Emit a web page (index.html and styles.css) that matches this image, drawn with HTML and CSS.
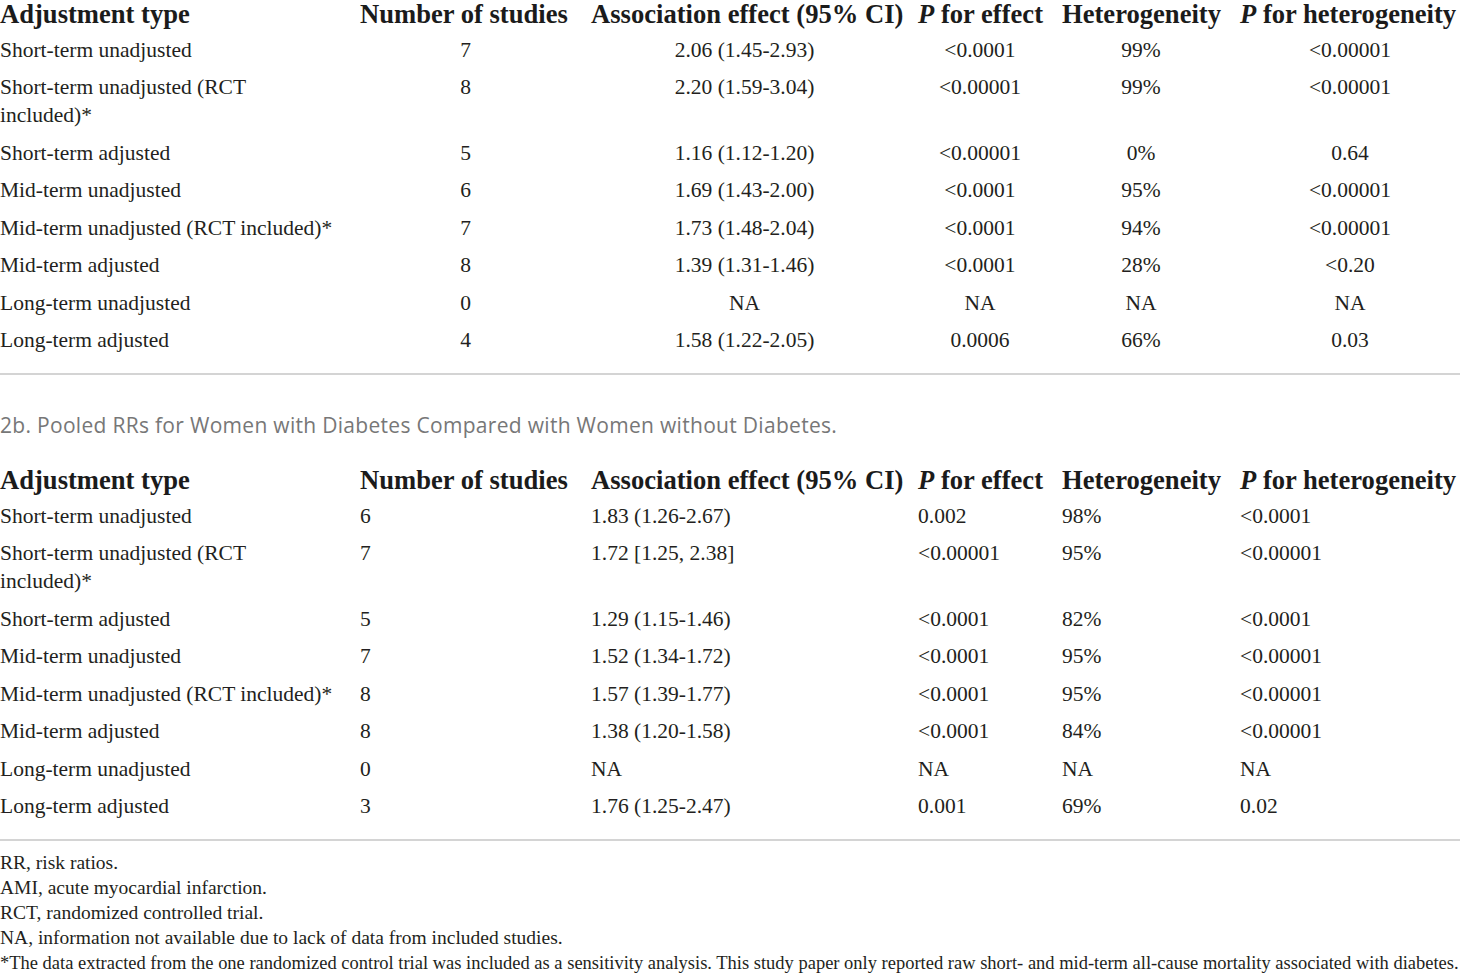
FILE: index.html
```html
<!DOCTYPE html>
<html>
<head>
<meta charset="utf-8">
<link rel="stylesheet" href="styles.css">
</head>
<body>
<div class="page">
  <table class="data centered">
    <colgroup>
      <col class="c1"><col class="c2"><col class="c3"><col class="c4"><col class="c5"><col class="c6">
    </colgroup>
    <thead>
      <tr><th class="first">Adjustment type</th><th>Number of studies</th><th>Association effect (95% CI)</th><th><i>P</i> for effect</th><th>Heterogeneity</th><th><i>P</i> for heterogeneity</th></tr>
    </thead>
    <tbody>
      <tr><td>Short-term unadjusted</td><td>7</td><td>2.06 (1.45-2.93)</td><td>&lt;0.0001</td><td>99%</td><td>&lt;0.00001</td></tr>
      <tr><td>Short-term unadjusted (RCT included)*</td><td>8</td><td>2.20 (1.59-3.04)</td><td>&lt;0.00001</td><td>99%</td><td>&lt;0.00001</td></tr>
      <tr><td>Short-term adjusted</td><td>5</td><td>1.16 (1.12-1.20)</td><td>&lt;0.00001</td><td>0%</td><td>0.64</td></tr>
      <tr><td>Mid-term unadjusted</td><td>6</td><td>1.69 (1.43-2.00)</td><td>&lt;0.0001</td><td>95%</td><td>&lt;0.00001</td></tr>
      <tr><td>Mid-term unadjusted (RCT included)*</td><td>7</td><td>1.73 (1.48-2.04)</td><td>&lt;0.0001</td><td>94%</td><td>&lt;0.00001</td></tr>
      <tr><td>Mid-term adjusted</td><td>8</td><td>1.39 (1.31-1.46)</td><td>&lt;0.0001</td><td>28%</td><td>&lt;0.20</td></tr>
      <tr><td>Long-term unadjusted</td><td>0</td><td>NA</td><td>NA</td><td>NA</td><td>NA</td></tr>
      <tr><td>Long-term adjusted</td><td>4</td><td>1.58 (1.22-2.05)</td><td>0.0006</td><td>66%</td><td>0.03</td></tr>
    </tbody>
  </table>
  <hr class="rule rule-top">
  <p class="caption">2b. Pooled RRs for Women with Diabetes Compared with Women without Diabetes.</p>
  <table class="data left">
    <colgroup>
      <col class="c1"><col class="c2"><col class="c3"><col class="c4"><col class="c5"><col class="c6">
    </colgroup>
    <thead>
      <tr><th class="first">Adjustment type</th><th>Number of studies</th><th>Association effect (95% CI)</th><th><i>P</i> for effect</th><th>Heterogeneity</th><th><i>P</i> for heterogeneity</th></tr>
    </thead>
    <tbody>
      <tr><td>Short-term unadjusted</td><td>6</td><td>1.83 (1.26-2.67)</td><td>0.002</td><td>98%</td><td>&lt;0.0001</td></tr>
      <tr><td>Short-term unadjusted (RCT included)*</td><td>7</td><td>1.72 [1.25, 2.38]</td><td>&lt;0.00001</td><td>95%</td><td>&lt;0.00001</td></tr>
      <tr><td>Short-term adjusted</td><td>5</td><td>1.29 (1.15-1.46)</td><td>&lt;0.0001</td><td>82%</td><td>&lt;0.0001</td></tr>
      <tr><td>Mid-term unadjusted</td><td>7</td><td>1.52 (1.34-1.72)</td><td>&lt;0.0001</td><td>95%</td><td>&lt;0.00001</td></tr>
      <tr><td>Mid-term unadjusted (RCT included)*</td><td>8</td><td>1.57 (1.39-1.77)</td><td>&lt;0.0001</td><td>95%</td><td>&lt;0.00001</td></tr>
      <tr><td>Mid-term adjusted</td><td>8</td><td>1.38 (1.20-1.58)</td><td>&lt;0.0001</td><td>84%</td><td>&lt;0.00001</td></tr>
      <tr><td>Long-term unadjusted</td><td>0</td><td>NA</td><td>NA</td><td>NA</td><td>NA</td></tr>
      <tr><td>Long-term adjusted</td><td>3</td><td>1.76 (1.25-2.47)</td><td>0.001</td><td>69%</td><td>0.02</td></tr>
    </tbody>
  </table>
  <hr class="rule rule-bottom">
  <div class="notes">
    <p>RR, risk ratios.</p>
    <p>AMI, acute myocardial infarction.</p>
    <p>RCT, randomized controlled trial.</p>
    <p>NA, information not available due to lack of data from included studies.</p>
    <p class="squeeze"><span>*The data extracted from the one randomized control trial was included as a sensitivity analysis. This study paper only reported raw short- and mid-term all-cause mortality associated with diabetes.</span></p>
  </div>
</div>
</body>
</html>
```

FILE: styles.css
```css
html, body {
  margin: 0;
  padding: 0;
  background: #ffffff;
}

.page {
  width: 1460px;
  font-family: "Liberation Serif", "Times New Roman", serif;
  color: #231f20;
  overflow: hidden;
}

.data {
  width: 1460px;
  border-collapse: collapse;
  table-layout: fixed;
}

.c1 { width: 360px; }
.c2 { width: 231px; }
.c3 { width: 327px; }
.c4 { width: 144px; }
.c5 { width: 178px; }
.c6 { width: 220px; }

.data th {
  font-size: 26.6px;
  font-weight: bold;
  color: #1b1b1b;
  line-height: 28px;
  padding: 0 0 3px 0;
  text-align: left;
  white-space: nowrap;
  vertical-align: top;
}

.data td {
  font-size: 21.5px;
  line-height: 28px;
  padding: 4.75px 0;
  vertical-align: top;
  text-align: left;
}

.data td:first-child {
  padding-right: 20px;
}

.centered td:not(:first-child) {
  text-align: center;
  padding-right: 20px;
}

.centered td:last-child {
  padding-right: 0;
}

.rule {
  border: 0;
  height: 2px;
  background: #d4d4d4;
  margin: 0;
}

.rule-top {
  margin-top: 14px;
}

.caption {
  font-family: "Open Sans", "Noto Sans", sans-serif;
  font-size: 21px;
  letter-spacing: 0.3px;
  color: #777777;
  margin: 38px 0 0 0;
  line-height: 24px;
}

.left {
  margin-top: 29px;
}

.rule-bottom {
  margin-top: 14px;
}

.notes {
  margin-top: 9px;
}

.notes p {
  margin: 0;
  font-size: 19.5px;
  line-height: 25px;
  white-space: nowrap;
}

.notes .squeeze span {
  display: inline-block;
  transform: scaleX(0.948);
  transform-origin: left center;
}
```
